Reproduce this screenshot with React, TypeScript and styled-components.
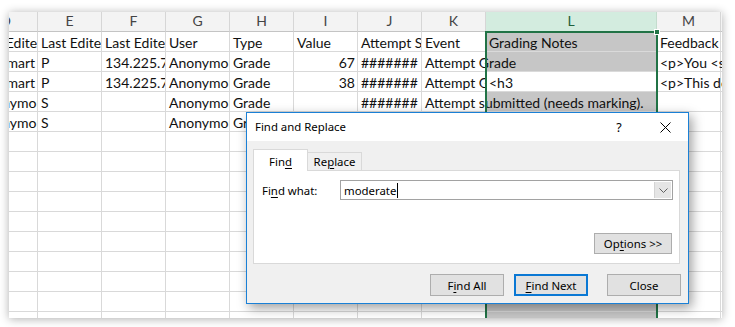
import React from 'react';
import styled, { createGlobalStyle } from 'styled-components';

const GlobalStyle = createGlobalStyle`
  html, body { margin: 0; padding: 0; background: #ffffff; }
  body { width: 735px; height: 327px; overflow: hidden; }
  * { box-sizing: border-box; }
`;

const COLS = [64, 64, 64, 64, 64, 64, 64, 64, 171, 64, 64];
const LETTERS = ['D', 'E', 'F', 'G', 'H', 'I', 'J', 'K', 'L', 'M', 'N'];
const SEL_COL = 8;
const ACTIVE_ROW_INDEX = 2;

type CellDef = { t?: string; r?: boolean };

const HASH = '#######';

const DATA: CellDef[][] = [
  [{ t: 'Last Edited by' }, { t: 'Last Edited by initials' }, { t: 'Last Edited from IP' }, { t: 'User' }, { t: 'Type' }, { t: 'Value' }, { t: 'Attempt Started' }, { t: 'Event' }, { t: 'Grading Notes' }, { t: 'Feedback to learner' }, {}],
  [{ t: 'Ian Smart' }, { t: 'P' }, { t: '134.225.72.18' }, { t: 'Anonymous' }, { t: 'Grade' }, { t: '67', r: true }, { t: HASH }, { t: 'Attempt Grade' }, {}, { t: '<p>You <span>' }, {}],
  [{ t: 'Ian Smart' }, { t: 'P' }, { t: '134.225.72.18' }, { t: 'Anonymous' }, { t: 'Grade' }, { t: '38', r: true }, { t: HASH }, { t: 'Attempt Grade' }, { t: '<h3' }, { t: '<p>This does' }, {}],
  [{ t: 'Anonymous' }, { t: 'S' }, {}, { t: 'Anonymous' }, { t: 'Grade' }, {}, { t: HASH }, { t: 'Attempt submitted (needs marking).' }, {}, {}, {}],
  [{ t: 'Anonymous' }, { t: 'S' }, {}, { t: 'Anonymous' }, { t: 'Grade' }, {}, { t: HASH }, { t: 'Attempt submitted (needs marking).' }, {}, {}, {}],
];
const TOTAL_ROWS = 15;

const Page = styled.div`
  position: relative;
  width: 735px;
  height: 327px;
  padding: 12px 0 0 9px;
`;

const Sheet = styled.div`
  width: 713px;
  height: 306px;
  overflow: hidden;
  background: #ffffff;
  box-shadow: 0 1px 9px rgba(0, 0, 0, 0.32);
`;

const Grid = styled.div`
  position: relative;
  display: grid;
  grid-template-columns: ${COLS.map((w) => `${w}px`).join(' ')};
  grid-auto-rows: 20px;
  margin-left: -35px;
  font-family: Lato, 'Liberation Sans', sans-serif;
  font-size: 14px;
  color: #111;
`;

const HeaderCell = styled.div<{ $selected?: boolean }>`
  height: 20px;
  line-height: 18px;
  text-align: center;
  color: ${(p) => (p.$selected ? '#1f5f3a' : '#444')};
  background: ${(p) => (p.$selected ? '#d3ecdf' : '#f3f3f3')};
  border-right: 1px solid ${(p) => (p.$selected ? '#c3dccd' : '#d6d6d6')};
  border-bottom: 1px solid ${(p) => (p.$selected ? '#217346' : '#c4c4c4')};
`;

const Cell = styled.div<{ $right?: boolean; $spill?: boolean; $selected?: boolean }>`
  position: relative;
  z-index: ${(p) => (p.$spill ? 1 : 0)};
  height: 20px;
  padding: 2px 2px 0 3px;
  line-height: 17px;
  white-space: nowrap;
  overflow: ${(p) => (p.$spill ? 'visible' : 'hidden')};
  text-align: ${(p) => (p.$right ? 'right' : 'left')};
  background: ${(p) => (p.$selected ? '#c6c6c6' : '#ffffff')};
  border-right: 1px solid ${(p) => (p.$selected ? '#c6c6c6' : '#d9d9d9')};
  border-bottom: 1px solid ${(p) => (p.$selected ? '#dadada' : '#d9d9d9')};
`;

const SelectionOutline = styled.div`
  position: absolute;
  z-index: 3;
  left: 511px;
  top: 19px;
  width: 173px;
  height: 400px;
  border: 2px solid #217346;
  pointer-events: none;
`;

const FillHandle = styled.div`
  position: absolute;
  z-index: 4;
  left: 680px;
  top: 17px;
  width: 6px;
  height: 6px;
  background: #217346;
  border: 1px solid #ffffff;
`;

/* ---------- dialog ---------- */

const Dialog = styled.div`
  position: absolute;
  z-index: 10;
  left: 246px;
  top: 112px;
  width: 443px;
  height: 192px;
  display: flex;
  flex-direction: column;
  background: #f0f0f0;
  border: 1px solid #1a80d6;
  box-shadow: 3px 4px 11px rgba(0, 0, 0, 0.38);
  font-family: 'Noto Sans', 'Open Sans', sans-serif;
  font-size: 11.4px;
  color: #000;
`;

const TitleBar = styled.div`
  height: 28px;
  display: flex;
  align-items: center;
  background: #ffffff;
`;

const Title = styled.div`
  flex: 1;
  padding-left: 8px;
  line-height: 28px;
`;

const CaptionButton = styled.div`
  width: 46px;
  height: 28px;
  display: flex;
  align-items: center;
  justify-content: center;
  font-size: 12.5px;
`;

const Body = styled.div`
  flex: 1;
  display: flex;
  flex-direction: column;
  padding: 8px 8px 0 6px;
`;

const TabStrip = styled.div`
  position: relative;
  z-index: 1;
  display: flex;
  align-items: flex-end;
  height: 22px;
  margin-bottom: -1px;
`;

const Tab = styled.div<{ $active?: boolean }>`
  width: ${(p) => (p.$active ? 55 : 54)}px;
  height: ${(p) => (p.$active ? 22 : 18)}px;
  margin-bottom: ${(p) => (p.$active ? 0 : 1)}px;
  display: flex;
  align-items: center;
  justify-content: center;
  padding-top: ${(p) => (p.$active ? 1 : 0)}px;
  background: ${(p) => (p.$active ? '#ffffff' : '#f0f0f0')};
  border: 1px solid #d9d9d9;
  border-bottom: none;
  ${(p) => (p.$active ? '' : 'border-left: none;')}
`;

const TabPanel = styled.div`
  height: 94px;
  display: flex;
  flex-direction: column;
  padding: 9px 6px 9px 8px;
  background: #ffffff;
  border: 1px solid #d9d9d9;
`;

const FieldRow = styled.div`
  display: flex;
  align-items: center;
  height: 20px;
`;

const Label = styled.div`
  width: 78px;
`;

const ComboBox = styled.div`
  flex: 1;
  height: 20px;
  display: flex;
  background: #ffffff;
  border: 1px solid #a2a2a2;
`;

const ComboText = styled.div`
  flex: 1;
  display: flex;
  align-items: center;
  padding-left: 3px;
`;

const Caret = styled.span`
  display: inline-block;
  width: 1px;
  height: 15px;
  margin-left: 1px;
  background: #000;
`;

const ComboArrow = styled.div`
  width: 17px;
  margin: 1px;
  display: flex;
  align-items: center;
  justify-content: center;
  background: #e5e5e5;
  border-left: 1px solid #d4d4d4;
`;

const OptionsRow = styled.div`
  margin-top: auto;
  display: flex;
  justify-content: flex-end;
  padding-right: 1px;
`;

const Button = styled.div<{ $default?: boolean; $spaced?: boolean; $w?: number }>`
  width: ${(p) => p.$w ?? 74}px;
  height: ${(p) => (p.$w ? 21 : 22)}px;
  margin-left: ${(p) => (p.$spaced ? 9 : 0)}px;
  display: flex;
  align-items: center;
  justify-content: center;
  background: #e1e1e1;
  border: ${(p) => (p.$default ? '2px solid #0a78d4' : '1px solid #adadad')};
`;

const ButtonRow = styled.div`
  display: flex;
  justify-content: flex-end;
  gap: 10px;
  margin-top: 10px;
  margin-right: -1px;
`;

const Key = styled.span`
  text-decoration: underline;
  text-underline-offset: 2px;
  text-decoration-thickness: 1px;
`;

function SheetView() {
  const rows: CellDef[][] = [];
  for (let i = 0; i < TOTAL_ROWS; i++) rows.push(DATA[i] ?? COLS.map(() => ({})));
  return (
    <Sheet>
      <Grid>
        {LETTERS.map((l, i) => (
          <HeaderCell key={l} $selected={i === SEL_COL}>
            {l}
          </HeaderCell>
        ))}
        {rows.map((row, ri) =>
          row.map((c, ci) => {
            const next = row[ci + 1];
            const spill = !!c.t && !c.r && (!next || !next.t);
            return (
              <Cell
                key={`${ri}-${ci}`}
                $right={c.r}
                $spill={spill}
                $selected={ci === SEL_COL && ri !== ACTIVE_ROW_INDEX}
              >
                {c.t}
              </Cell>
            );
          })
        )}
        <SelectionOutline />
        <FillHandle />
      </Grid>
    </Sheet>
  );
}

function FindReplaceDialog() {
  return (
    <Dialog>
      <TitleBar>
        <Title>Find and Replace</Title>
        <CaptionButton>?</CaptionButton>
        <CaptionButton>
          <svg width="11" height="11" viewBox="0 0 11 11">
            <path d="M0.5 0.5 L10.5 10.5 M10.5 0.5 L0.5 10.5" stroke="#000" strokeWidth="1" fill="none" />
          </svg>
        </CaptionButton>
      </TitleBar>
      <Body>
        <TabStrip>
          <Tab $active>
            <span>
              Fin<Key>d</Key>
            </span>
          </Tab>
          <Tab>
            <span>
              Re<Key>p</Key>lace
            </span>
          </Tab>
        </TabStrip>
        <TabPanel>
          <FieldRow>
            <Label>
              Fi<Key>n</Key>d what:
            </Label>
            <ComboBox>
              <ComboText>
                moderate
                <Caret />
              </ComboText>
              <ComboArrow>
                <svg width="9" height="5" viewBox="0 0 9 5">
                  <path d="M0.5 0.5 L4.5 4.5 L8.5 0.5" stroke="#606060" strokeWidth="1" fill="none" />
                </svg>
              </ComboArrow>
            </ComboBox>
          </FieldRow>
          <OptionsRow>
            <Button $w={78}>
              <span>
                Op<Key>t</Key>ions &gt;&gt;
              </span>
            </Button>
          </OptionsRow>
        </TabPanel>
        <ButtonRow>
          <Button>
            <span>
              F<Key>i</Key>nd All
            </span>
          </Button>
          <Button $default>
            <span>
              <Key>F</Key>ind Next
            </span>
          </Button>
          <Button $spaced>Close</Button>
        </ButtonRow>
      </Body>
    </Dialog>
  );
}

export default function App() {
  return (
    <>
      <GlobalStyle />
      <Page>
        <SheetView />
        <FindReplaceDialog />
      </Page>
    </>
  );
}
